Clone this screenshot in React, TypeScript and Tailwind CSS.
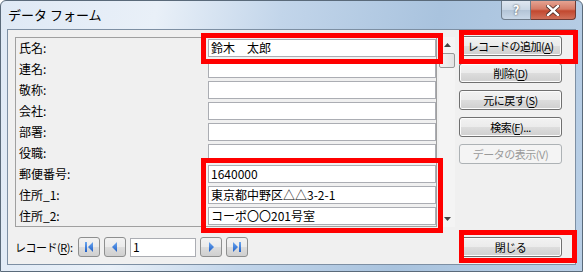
import React from 'react';

const FONT = "font-['MS_UI_Gothic','Noto_Sans_CJK_JP',sans-serif]";

const fields: { label: string; value: string }[] = [
  { label: '氏名:', value: '鈴木　太郎' },
  { label: '連名:', value: '' },
  { label: '敬称:', value: '' },
  { label: '会社:', value: '' },
  { label: '部署:', value: '' },
  { label: '役職:', value: '' },
  { label: '郵便番号:', value: '1640000' },
  { label: '住所_1:', value: '東京都中野区△△3-2-1' },
  { label: '住所_2:', value: 'コーポ〇〇201号室' },
];

const Btn: React.FC<{ children: React.ReactNode; disabled?: boolean }> = ({ children, disabled }) => (
  <div
    className={
      disabled
        ? 'h-[20px] w-[103px] rounded-[3px] border border-[#adb2b5] bg-[#f4f4f4] text-[#9a9a9a] flex items-center justify-center text-[11px] tracking-[-0.5px] whitespace-nowrap'
        : 'h-[20px] w-[103px] rounded-[3px] border border-[#707070] bg-[linear-gradient(#f2f2f2_0%,#ebebeb_50%,#dddddd_51%,#cfcfcf_100%)] text-black flex items-center justify-center text-[11px] tracking-[-0.5px] whitespace-nowrap shadow-[inset_0_0_0_1px_#fcfcfc]'
    }
  >
    {children}
  </div>
);

const NavBtn: React.FC<{ kind: 'first' | 'prev' | 'next' | 'last' }> = ({ kind }) => (
  <div className="h-[20px] w-[22px] rounded-[3px] border border-[#8e8f8f] bg-[linear-gradient(#f2f2f2_0%,#ebebeb_50%,#dddddd_51%,#cfcfcf_100%)] flex items-center justify-center">
    <svg width="12" height="12" viewBox="0 0 12 12">
      <defs>
        <linearGradient id={`g-${kind}`} x1="0" y1="0" x2="0" y2="1">
          <stop offset="0" stopColor="#6aa6ef" />
          <stop offset="1" stopColor="#1f5fc8" />
        </linearGradient>
      </defs>
      {kind === 'first' && (
        <>
          <rect x="2" y="1" width="2" height="10" fill={`url(#g-${kind})`} />
          <polygon points="10,1 10,11 5,6" fill={`url(#g-${kind})`} />
        </>
      )}
      {kind === 'prev' && <polygon points="8,1 8,11 3,6" fill={`url(#g-${kind})`} />}
      {kind === 'next' && <polygon points="4,1 4,11 9,6" fill={`url(#g-${kind})`} />}
      {kind === 'last' && (
        <>
          <polygon points="2,1 2,11 7,6" fill={`url(#g-${kind})`} />
          <rect x="8" y="1" width="2" height="10" fill={`url(#g-${kind})`} />
        </>
      )}
    </svg>
  </div>
);

const U: React.FC<{ children: React.ReactNode }> = ({ children }) => (
  <span className="underline underline-offset-2">{children}</span>
);

export default function App() {
  return (
    <div
      className={`relative w-[583px] h-[272px] overflow-hidden border border-[#5a6a7a] rounded-t-[6px] bg-[linear-gradient(100deg,#dfe9f5_0%,#e9f0f8_25%,#c2d5ea_45%,#a9c3de_70%,#b9cfe6_100%)] ${FONT}`}
    >
      {/* title bar */}
      <div className="h-[28px] flex items-start">
        <div className="pl-[7px] pt-[6px] text-[13px] text-black leading-[16px]">データ フォーム</div>
        <div className="ml-auto mr-[6px] flex">
          <div className="w-[30px] h-[19px] rounded-bl-[4px] border border-[#6f7d8b] border-t-0 bg-[linear-gradient(#dfe7f0_0%,#c9d6e4_50%,#b3c4d6_51%,#c9d8e8_100%)] flex items-center justify-center text-white font-bold text-[13px] [text-shadow:0_0_2px_#333]">
            ?
          </div>
          <div className="w-[45px] h-[19px] rounded-br-[4px] border border-[#6f3a33] border-t-0 border-l-0 bg-[linear-gradient(#e5a392_0%,#d57a65_45%,#c2482f_55%,#d0705a_100%)] flex items-center justify-center">
            <svg width="14" height="11" viewBox="0 0 14 11">
              <path d="M2 1 L12 10 M12 1 L2 10" stroke="#4a2a25" strokeWidth="4" strokeLinecap="square" />
              <path d="M2 1 L12 10 M12 1 L2 10" stroke="#ffffff" strokeWidth="2.4" strokeLinecap="square" />
            </svg>
          </div>
        </div>
      </div>

      {/* client area */}
      <div className="ml-[6px] w-[569px] h-[236px] border border-[#7d8fa3] bg-[#f0f0f0] flex text-[12px] text-black">
        <div className="w-[443px] pl-[7px] pt-[7px] flex flex-col">
          <div className="flex h-[190px]">
            {/* group box */}
            <div className="w-[424px] h-[190px] border border-[#a0a0a0] pt-[1px] pl-[3px] flex flex-col gap-[3px]">
              {fields.map((f) => (
                <div key={f.label} className="flex items-center h-[18px]">
                  <div className="w-[189px] leading-[14px]">{f.label}</div>
                  <div className="w-[228px] h-[18px] border border-[#abadb3] bg-white px-[2px] leading-[16px] whitespace-nowrap">
                    {f.value}
                  </div>
                </div>
              ))}
            </div>
            {/* scrollbar */}
            <div className="ml-[2px] w-[17px] h-[190px] bg-[#f4f4f4] flex flex-col items-center">
              <div className="h-[16px] flex items-center justify-center">
                <svg width="7" height="4" viewBox="0 0 7 4"><polygon points="0,4 7,4 3.5,0" fill="#444" /></svg>
              </div>
              <div className="w-[16px] h-[15px] rounded-[2px] border border-[#979797] bg-[linear-gradient(90deg,#f3f3f3,#e2e2e2)]" />
              <div className="flex-1" />
              <div className="h-[17px] flex items-center justify-center">
                <svg width="7" height="4" viewBox="0 0 7 4"><polygon points="0,0 7,0 3.5,4" fill="#444" /></svg>
              </div>
            </div>
          </div>
          {/* record navigator */}
          <div className="mt-[10px] flex items-center h-[20px]">
            <div className="w-[63px] whitespace-nowrap text-[11px] tracking-[-0.5px]">
              レコード(<U>R</U>):
            </div>
            <div className="flex items-center gap-[4px]">
              <NavBtn kind="first" />
              <NavBtn kind="prev" />
              <div className="w-[66px] h-[19px] border border-[#abadb3] bg-white px-[2px] leading-[16px]">1</div>
              <NavBtn kind="next" />
              <NavBtn kind="last" />
            </div>
          </div>
        </div>

        {/* buttons */}
        <div className="ml-[8px] pt-[6px] pb-[7px] flex flex-col">
          <div className="flex flex-col gap-[7px]">
            <Btn>レコードの追加(<U>A</U>)</Btn>
            <Btn>削除(<U>D</U>)</Btn>
            <Btn>元に戻す(<U>S</U>)</Btn>
            <Btn>検索(<U>F</U>)...</Btn>
            <Btn disabled>データの表示(V)</Btn>
          </div>
          <div className="mt-auto">
            <Btn>閉じる</Btn>
          </div>
        </div>
      </div>

      {/* red highlight annotations */}
      <div className="absolute left-[200px] top-[32px] w-[242px] h-[31px] border-[5px] border-[#ff0000]" />
      <div className="absolute left-[200px] top-[157px] w-[242px] h-[75px] border-[5px] border-[#ff0000]" />
      <div className="absolute left-[458px] top-[29px] w-[119px] h-[34px] border-[5px] border-[#ff0000]" />
      <div className="absolute left-[458px] top-[229px] w-[118px] h-[33px] border-[5px] border-[#ff0000]" />
    </div>
  );
}
